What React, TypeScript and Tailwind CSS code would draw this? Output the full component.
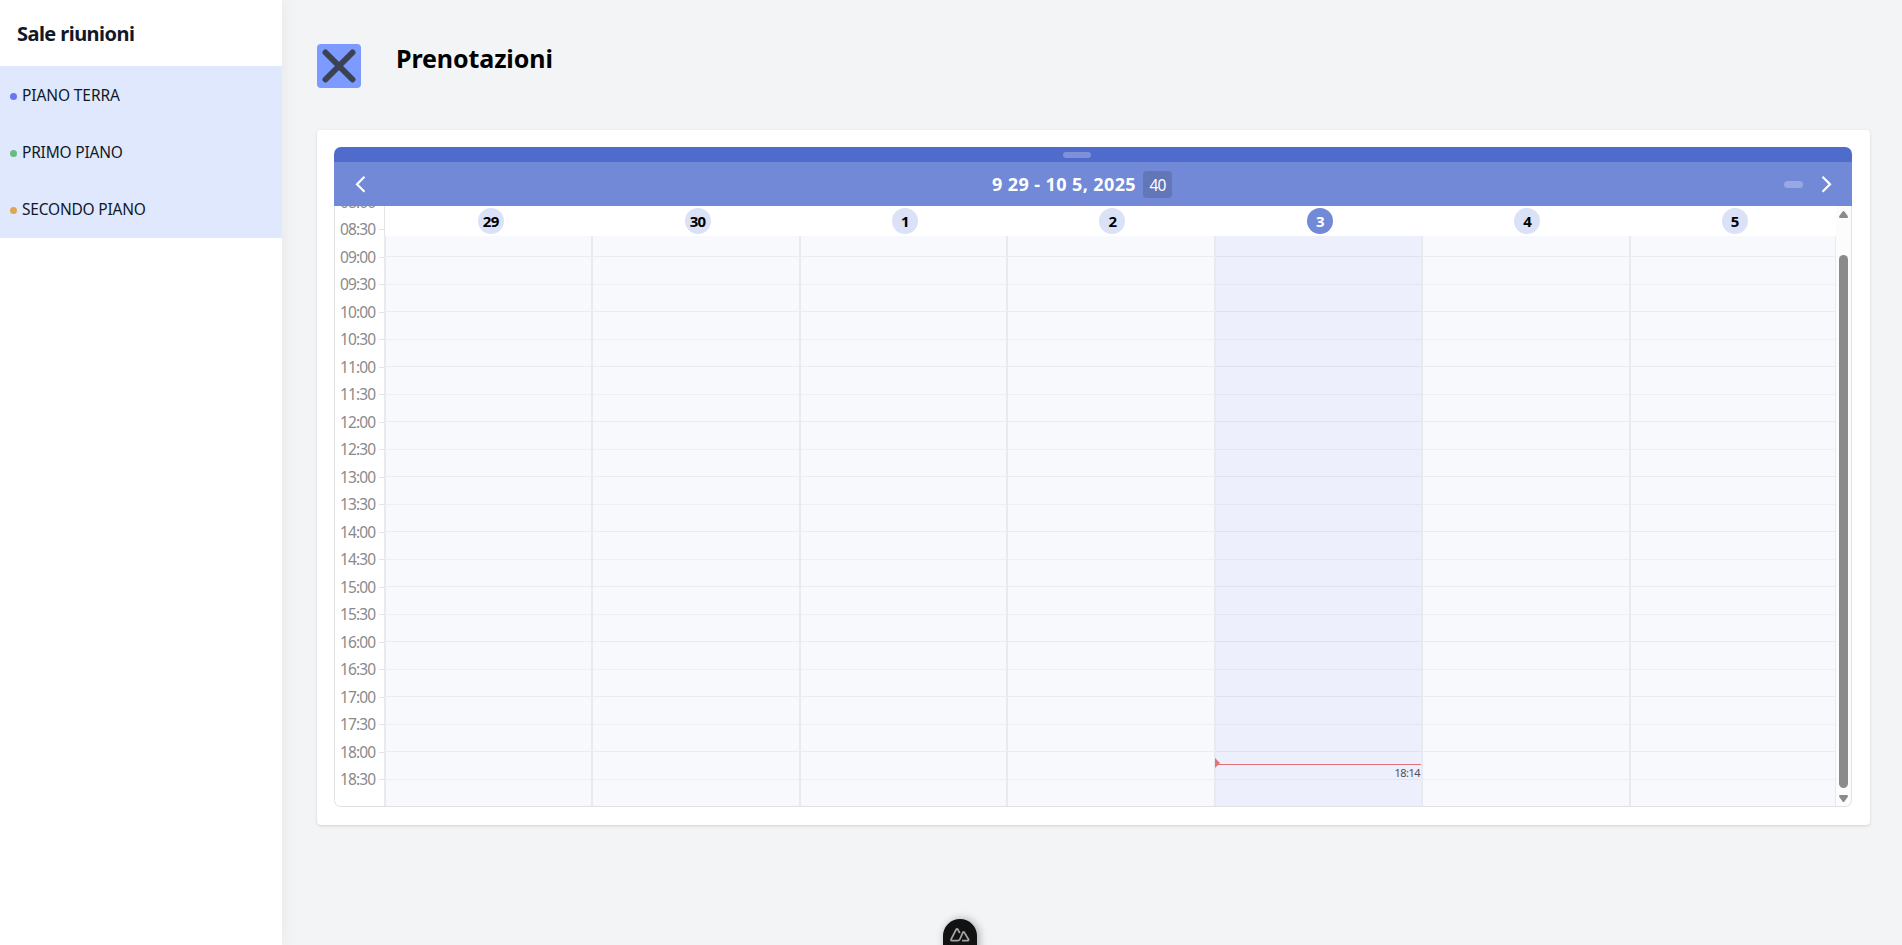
const days = ["29", "30", "1", "2", "3", "4", "5"];
const times = Array.from({ length: 21 }, (_, i) => {
  const h = 8 + Math.floor((i + 1) / 2);
  return `${String(h).padStart(2, "0")}:${(i + 1) % 2 ? "30" : "00"}`;
});
const floors = [
  { name: "PIANO TERRA", dot: "bg-[#6875f5]", track: "tracking-[-0.1px]" },
  { name: "PRIMO PIANO", dot: "bg-[#68bb83]", track: "tracking-[-0.2px]" },
  { name: "SECONDO PIANO", dot: "bg-[#dda751]", track: "tracking-[-0.2px]" },
];

function Sidebar() {
  return (
    <aside className="z-10 w-[282px] shrink-0 bg-white shadow-[0_0_18px_rgba(0,0,0,0.06)]">
      <div className="flex h-[66px] items-center pt-[2px] pl-[17px]">
        <h2 className="text-[20px] leading-7 font-bold tracking-[-0.55px] text-[#111827]">Sale riunioni</h2>
      </div>
      <ul className="h-[172px] bg-[#e0e8fd]">
        {floors.map((f) => (
          <li key={f.name} className="flex h-[57px] items-center pt-[2px] pl-[10px]">
            <span className={`mt-[2px] mr-[5px] size-[7px] rounded-full ${f.dot}`} />
            <span className={`-mt-[1px] text-[15.5px] leading-6 text-[#111827] ${f.track}`}>{f.name}</span>
          </li>
        ))}
      </ul>
    </aside>
  );
}

function CalendarHeader() {
  return (
    <div className="overflow-hidden rounded-t-[7px]">
      <div className="flex h-[15px] items-center justify-center bg-[#4f6ccc]">
        <span className="mt-[1px] ml-[-33px] h-[6px] w-[28px] rounded-full bg-[#7c91d9]" />
      </div>
      <div className="flex h-[44px] items-center bg-[#7189d7] text-white">
        <svg className="ml-[21px]" width="12" height="18" viewBox="0 0 12 18" fill="none" stroke="white" strokeWidth="2.2">
          <path d="M9.5 1.8 L2 9.3 L9.5 16.8" />
        </svg>
        <div className="flex flex-1 items-center pl-[625px]">
          <span className="w-[144px] text-[18px] font-bold whitespace-nowrap tracking-[0.4px]">9 29 - 10 5, 2025</span>
          <span className="ml-[7px] flex h-[27px] w-[29px] items-center justify-center rounded-[4px] bg-[#6376b8] pt-[1px] text-[15.5px] leading-6 tracking-[-0.9px]">40</span>
        </div>
        <span className="mt-[1px] mr-[18px] h-[7px] w-[19px] rounded-full bg-[#98a8e2]" />
        <svg className="mr-[19px]" width="12" height="18" viewBox="0 0 12 18" fill="none" stroke="white" strokeWidth="2.2">
          <path d="M1.5 1.8 L9 9.3 L1.5 16.8" />
        </svg>
      </div>
    </div>
  );
}

function TimeColumn() {
  return (
    <div className="h-[600px] w-[49px] shrink-0 overflow-hidden bg-white">
      <div className="mt-[-18px] flex flex-col">
        <TimeLabel text="08:00" half={false} />
        {times.map((t, i) => (
          <TimeLabel key={t} text={t} half={i % 2 === 0} />
        ))}
      </div>
    </div>
  );
}

function TimeLabel({ text, half }: { text: string; half: boolean }) {
  return (
    <div className={`flex items-center ${half ? "h-[27px]" : "h-[28px]"}`}>
      <span className="-mt-[1px] w-[39px] pl-[5px] text-[15.5px] leading-6 tracking-[-0.9px] text-[#8a8a8a]">{text}</span>
      <span className="ml-auto h-px w-[5px] bg-[#e3e3e3]" />
    </div>
  );
}

function DayColumn({ day, today }: { day: string; today: boolean }) {
  return (
    <div className="flex flex-1 flex-col">
      <div className={`flex h-[30px] shrink-0 items-start justify-center bg-white pt-[2px] pl-[5px] ${day === "29" ? "border-l border-[#e4e4e7]" : ""}`}>
        <span className={`flex size-[26px] items-center justify-center rounded-full text-[15px] font-bold tracking-[-0.7px] ${today ? "bg-[#7189d7] text-white" : "bg-[#dbe1f6] text-black"}`}>
          {day}
        </span>
      </div>
      <div className={`flex flex-1 flex-col border-l-2 border-[#e9eaee] ${today ? "bg-[#edeffc]" : "bg-[#f8f9fd]"} ${day === "5" ? "border-r border-r-[#e9eaee]" : ""}`}>
        <div className="h-[21px] border-b border-black/5" />
        {times.slice(1).map((t, i) => (
          <div key={t} className={`relative border-b ${i % 2 ? "h-[27px] border-[#000000]/5" : "h-[28px] border-[#000000]/4"} ${i === 19 ? "border-transparent" : ""}`}>
            {today && t === "18:00" && (
              <div className="absolute top-[12px] right-0 -left-px h-px bg-[#e07078]">
                <svg className="absolute top-[-6px] left-0" width="5" height="10" viewBox="0 0 5 10">
                  <path d="M0 0 L5 5 L0 10 Z" fill="#e2737a" />
                </svg>
                <span className="absolute top-[2px] right-[1px] text-[11px] leading-[14px] tracking-[-0.5px] text-[#505055]">18:14</span>
              </div>
            )}
          </div>
        ))}
      </div>
    </div>
  );
}

function Scrollbar() {
  return (
    <div className="flex w-[15px] shrink-0 flex-col items-center bg-[#fcfcfc] pt-[5px]">
      <svg width="9" height="7" viewBox="0 0 9 7" fill="#8b8b8b">
        <path d="M3.6 .6 Q4.5 -.5 5.4 .6 L8.7 5 Q9.4 7 8 7 H1 Q-.4 7 .3 5 Z" />
      </svg>
      <div className="mt-[37px] h-[533px] w-[9px] rounded-full bg-[#8b8b8b]" />
      <svg className="mt-[7px]" width="9" height="7" viewBox="0 0 9 7" fill="#8b8b8b">
        <path d="M3.6 6.4 Q4.5 7.5 5.4 6.4 L8.7 2 Q9.4 0 8 0 H1 Q-.4 0 .3 2 Z" />
      </svg>
    </div>
  );
}

export default function App() {
  return (
    <div className="relative flex h-[945px] w-full overflow-hidden bg-[#f2f4f6] font-['Noto_Sans','Open_Sans',sans-serif]">
      <Sidebar />
      <main className="flex-1 pr-[32px] pl-[35px]">
        <header className="flex h-[130px] pt-[44px]">
          <button className="flex size-[44px] items-center justify-center rounded-[4px] bg-[#7c9aff]">
            <svg width="34" height="34" viewBox="0 0 34 34" stroke="#3b4252" strokeWidth="6" strokeLinecap="round">
              <path d="M3.5 3.5 L30.5 30.5 M30.5 3.5 L3.5 30.5" />
            </svg>
          </button>
          <h1 className="-mt-[2px] ml-[35px] text-[25px] leading-8 font-bold tracking-[-0.1px] text-black">Prenotazioni</h1>
        </header>
        <section className="h-[695px] rounded-[4px] bg-white pt-[17px] pr-[18px] pl-[17px] shadow-[0_1px_3px_rgba(0,0,0,0.14)]">
          <CalendarHeader />
          <div className="flex h-[601px] overflow-hidden rounded-b-[7px] border-x border-b border-[#e1e1e4]">
            <TimeColumn />
            <div className="flex flex-1">
              {days.map((d) => (
                <DayColumn key={d} day={d} today={d === "3"} />
              ))}
            </div>
            <Scrollbar />
          </div>
        </section>
      </main>
      <div className="absolute top-[919px] left-[943px] flex h-[40px] w-[34px] justify-center rounded-t-full bg-[#121212] pt-[9px] shadow-[2px_0_8px_rgba(0,0,0,0.3)]">
        <svg width="20" height="14" viewBox="0 0 20 14" fill="none" stroke="#a3a3a3" strokeWidth="1.8" strokeLinejoin="round">
          <path d="M8 12.6 H1.8 Q.6 12.4 1.2 11.2 L6.1 1.6 Q7 .4 7.9 1.6 L9.8 5 M8 12.6 Q9.4 12.4 10 11 L12.8 4.6 Q13.6 3.4 14.4 4.6 L18.6 11.5 Q18.8 12.5 17.8 12.6 H12" />
        </svg>
      </div>
    </div>
  );
}
